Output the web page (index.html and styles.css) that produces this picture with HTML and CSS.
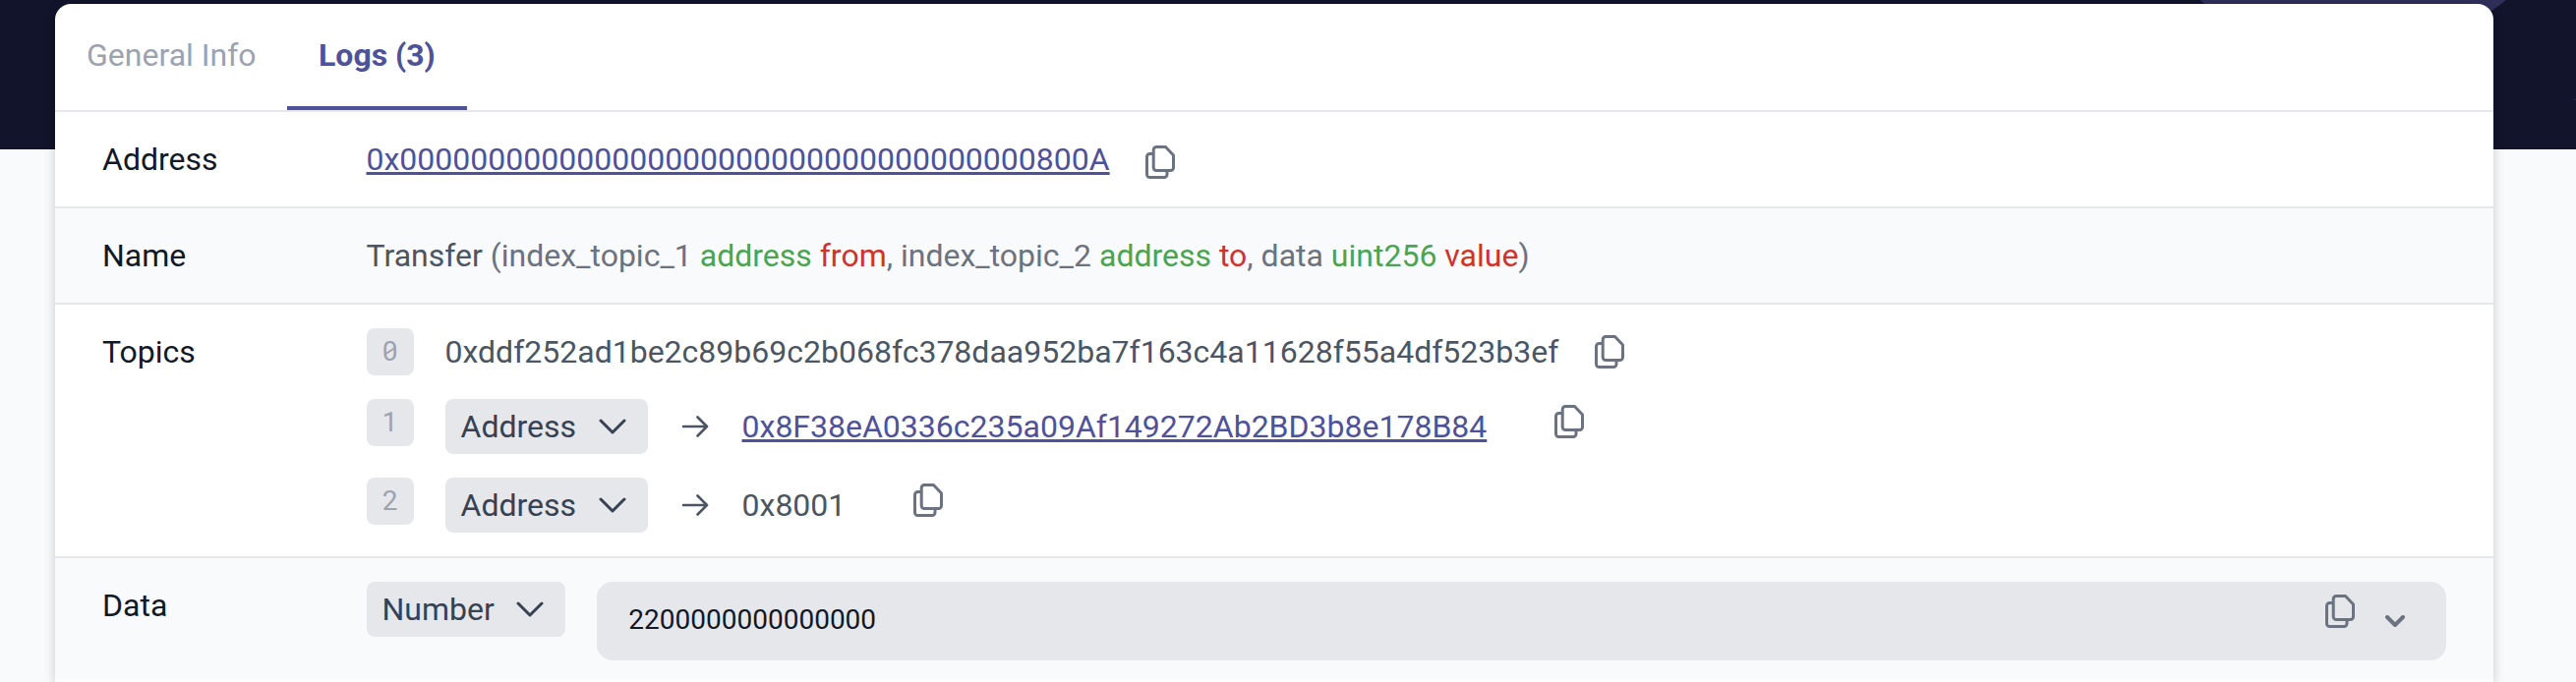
FILE: index.html
```html
<!DOCTYPE html>
<html lang="en">
<head>
<meta charset="utf-8">
<title>Transaction logs</title>
<link rel="stylesheet" href="styles.css">
</head>
<body>
<svg class="symbols" aria-hidden="true">
  <symbol id="copy" viewBox="0 0 30 34"><path d="M8.200 8.500H4.500a3 3 0 0 0-3 3v18a3 3 0 0 0 3 3H19a3 3 0 0 0 3-3v-4M11.200 1.500H20.500L28.500 10V22.500a3 3 0 0 1-3 3H11.200a3 3 0 0 1-3-3V4.500a3 3 0 0 1 3-3z"/></symbol>
  <symbol id="chevron" viewBox="0 0 28 16"><path d="M2 2l12 12L26 2"/></symbol>
  <symbol id="arrow" viewBox="0 0 28 22"><path d="M2 11h24M16.500 1.500L26 11l-9.500 9.500"/></symbol>
</svg>
<header class="hero"><svg class="hero-shape" viewBox="0 0 2620 152"><path d="M2238 0H2549L2530 14H2252z"/><path class="glint" d="M2620 99.500v2.500h-4z"/></svg></header>
<main class="card">
  <nav class="tabs">
    <a class="tab">General Info</a>
    <a class="tab active">Logs (3)</a>
  </nav>
  <section class="row">
    <h2 class="label">Address</h2>
    <div class="value"><a class="link">0x000000000000000000000000000000000000800A</a><svg class="copy copy-low"><use href="#copy"/></svg></div>
  </section>
  <section class="row shaded">
    <h2 class="label">Name</h2>
    <div class="value signature"><span class="method">Transfer</span> (index_topic_1 <span class="type">address</span> <span class="param">from</span>, index_topic_2 <span class="type">address</span> <span class="param">to</span>, data <span class="type">uint256</span> <span class="param">value</span>)</div>
  </section>
  <section class="row topics">
    <h2 class="label">Topics</h2>
    <div class="value topic-list">
      <div class="topic first"><span class="index slashed">0</span><span class="hash">0xddf252ad1be2c89b69c2b068fc378daa952ba7f163c4a11628f55a4df523b3ef</span><svg class="copy"><use href="#copy"/></svg></div>
      <div class="topic"><span class="index">1</span><button class="select">Address<svg class="chevron"><use href="#chevron"/></svg></button><svg class="arrow"><use href="#arrow"/></svg><a class="link">0x8F38eA0336c235a09Af149272Ab2BD3b8e178B84</a><svg class="copy copy-far"><use href="#copy"/></svg></div>
      <div class="topic"><span class="index">2</span><button class="select">Address<svg class="chevron"><use href="#chevron"/></svg></button><svg class="arrow"><use href="#arrow"/></svg><span>0x8001</span><svg class="copy copy-far"><use href="#copy"/></svg></div>
    </div>
  </section>
  <section class="row shaded data">
    <h2 class="label">Data</h2>
    <div class="value data-value">
      <button class="select">Number<svg class="chevron"><use href="#chevron"/></svg></button>
      <div class="box"><span class="number">2200000000000000</span><svg class="copy"><use href="#copy"/></svg><svg class="expand" viewBox="0 0 20 12"><path d="M2 2l8 8 8-8"/></svg></div>
    </div>
  </section>
</main>
</body>
</html>
```
FILE: styles.css
```css
* { box-sizing: border-box; }
body {
  margin: 0;
  height: 694px;
  background: #f9fafc;
  color: #4b5563;
  font: 32px/48px Roboto, sans-serif;
}
svg { fill: none; stroke: currentColor; stroke-linecap: round; stroke-linejoin: round; flex: none; }
.symbols { position: absolute; width: 0; height: 0; }
.hero { height: 152px; background: #11142b; }
.hero-shape { display: block; width: 2620px; height: 152px; fill: #2f2f5a; stroke: none; }
.glint { opacity: .5; }
.card {
  position: relative;
  height: 690px;
  margin: -148px 84px 0 56px;
  border-radius: 16px 16px 0 0;
  background: #fff;
  box-shadow: 0 2px 12px rgba(0, 0, 0, .2);
}
.tabs { display: flex; height: 110px; border-bottom: 2px solid #e5e7eb; }
.tab { height: 108px; padding: 28px 31.5px 0 32px; color: #9ca3af; }
.tab.active { padding-right: 32.5px; color: #4e529a; font-weight: 700; border-bottom: 4px solid #4e529a; }
.row { display: flex; height: 98px; padding: 24px 48px 0; border-bottom: 2px solid #e5e7eb; }
.shaded { background: #f9fafc; }
.label { width: 268.5px; margin: 0; flex: none; font-size: 32px; font-weight: 400; color: #111827; }
.value { flex: 1; display: flex; }
.signature { display: block; color: #6b7280; }
.method { color: #4b5563; }
.type { color: #4aa450; }
.param { color: #cf332a; }
.link { color: #4e529a; text-decoration: underline; text-decoration-thickness: 3px; text-underline-offset: 2px; }
.copy { width: 30px; height: 34px; margin-left: 36.5px; color: #6b7280; stroke-width: 3; }
.copy-low { margin-top: 10px; }
.topics { height: 258px; }
.topic-list { flex-direction: column; gap: 24px; }
.topic { display: flex; height: 56px; }
.topic.first { height: 48px; }
.topic .copy { margin-top: 7px; }
.topic .copy-far { margin-left: 69px; margin-top: 6px; }
.topic .link, .topic .arrow + span { margin-top: 4px; }
.index {
  width: 48px; height: 48px; margin-right: 32px;
  border-radius: 8px; background: #e5e7eb; color: #9ca3af;
  font-size: 28px; text-align: center;
}
.slashed { position: relative; }
.slashed::after {
  content: ""; position: absolute; left: 18px; top: 22px; width: 12px; height: 2px;
  background: currentColor; transform: rotate(-33deg);
}
.select {
  display: flex; align-items: center; height: 56px; padding: 0 22px 0 16px;
  border: 0; border-radius: 8px; background: #e5e7eb; color: #374151;
  font: inherit; flex: none;
}
.chevron { width: 28px; height: 16px; margin-left: 22.5px; stroke-width: 3; }
.arrow { width: 28px; height: 22px; margin: 17px 34px 0; stroke-width: 2.6; }
.data { height: 124px; border-bottom: 0; }
.data-value { gap: 32px; }
.box { display: flex; flex: 1; height: 80px; padding: 0 42px 0 32px; border-radius: 16px; background: #e5e7eb; }
.number { flex: 1; font-size: 28px; line-height: 78px; color: #111827; }
.box .copy { margin-top: 13px; }
.expand { width: 20px; height: 12px; margin: 34px 0 0 31px; stroke-width: 4; color: #6b7280; }
```
